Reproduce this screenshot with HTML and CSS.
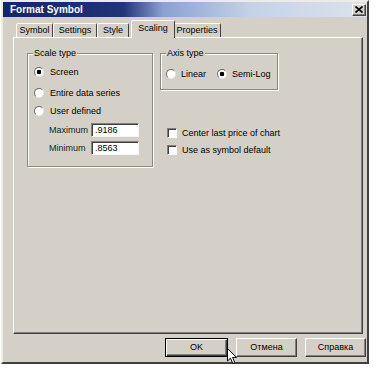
FILE: index.html
```html
<!DOCTYPE html>
<html lang="en">
<head>
  <meta charset="UTF-8">
  <title>Format Symbol</title>
  <link rel="stylesheet" href="styles.css">
</head>
<body>
  <div class="dialog">
    <div class="titlebar">
      <span class="title">Format Symbol</span>
      <div class="close-btn">
        <svg width="8" height="7" viewBox="0 0 8 7"><path d="M0.5 0.5 L7.5 6.5 M7.5 0.5 L0.5 6.5" stroke="#000" stroke-width="1.6"/></svg>
      </div>
    </div>

    <div class="tabs">
      <div class="tab tab-symbol">Symbol</div>
      <div class="tab tab-settings">Settings</div>
      <div class="tab tab-style">Style</div>
      <div class="tab tab-scaling active">Scaling</div>
      <div class="tab tab-properties">Properties</div>
    </div>

    <div class="panel">
      <div class="group scale-group">
        <span class="legend">Scale type</span>
        <div class="option first"><span class="radio checked"></span>Screen</div>
        <div class="option second"><span class="radio"></span>Entire data series</div>
        <div class="option third"><span class="radio"></span>User defined</div>
        <div class="field max-field"><span class="field-label">Maximum</span><span class="input">.9186</span></div>
        <div class="field min-field"><span class="field-label">Minimum</span><span class="input">.8563</span></div>
      </div>

      <div class="right-col">
        <div class="group axis-group">
          <span class="legend">Axis type</span>
          <div class="option-row">
            <div class="option"><span class="radio"></span>Linear</div>
            <div class="option semi"><span class="radio checked"></span>Semi-Log</div>
          </div>
        </div>
        <div class="checks">
          <div class="check-row"><span class="checkbox"></span>Center last price of chart</div>
          <div class="check-row"><span class="checkbox"></span>Use as symbol default</div>
        </div>
      </div>
    </div>

    <div class="buttons">
      <div class="btn default">OK</div>
      <div class="btn">Отмена</div>
      <div class="btn">Справка</div>
    </div>

    <!-- mouse pointer over the OK button -->
    <svg class="cursor" width="11" height="17" viewBox="0 0 11 17">
      <path d="M0.5 0.5 L0.5 13 L3.5 10.2 L5.8 15.5 L7.8 14.6 L5.6 9.4 L9.5 9.4 Z" fill="#fff" stroke="#000" stroke-width="1"/>
    </svg>
  </div>
</body>
</html>
```

FILE: styles.css
```css
body {
  margin: 0;
  background: #ffffff;
  font-family: "Liberation Sans", Arial, sans-serif;
  font-size: 9px;
  color: #000000;
}

.dialog {
  position: relative;
  margin-left: 1px;
  width: 368px;
  height: 364px;
  box-sizing: border-box;
  background: #d4d0c8;
  border: 2px solid;
  border-color: #ecebe6 #404040 #404040 #ecebe6;
  display: flex;
  flex-direction: column;
}

/* Title bar */
.titlebar {
  height: 15px;
  flex: none;
  display: flex;
  align-items: center;
  justify-content: space-between;
  padding: 0 1px 0 7px;
  background: linear-gradient(90deg, #14246a 0%, #203476 33%, #8aa2d0 44%, #c4d2e8 68%, #dce2ec 100%);
  color: #ffffff;
}

.title {
  font-size: 10px;
  font-weight: bold;
}

.close-btn {
  width: 14px;
  height: 12px;
  box-sizing: border-box;
  background: #d4d0c8;
  border: 1px solid;
  border-color: #ffffff #404040 #404040 #ffffff;
  box-shadow: inset -1px -1px #808080;
  display: flex;
  justify-content: center;
  align-items: center;
}

/* Tabs */
.tabs {
  display: flex;
  align-items: flex-end;
  height: 17px;
  margin-top: 3px;
  padding-left: 13px;
  flex: none;
}

.tab {
  height: 14px;
  box-sizing: border-box;
  border: 1px solid;
  border-bottom: none;
  border-color: #ffffff #404040 transparent #ffffff;
  border-radius: 2px 2px 0 0;
  text-align: center;
  line-height: 13px;
  background: #d4d0c8;
}

.tab-symbol { width: 37px; }
.tab-settings { width: 44px; }
.tab-style { width: 32px; }
.tab-scaling { width: 42px; }
.tab-properties { width: 48px; }

.tab.active {
  position: relative;
  z-index: 1;
  height: 18px;
  margin: 0 -2px -1px 2px;
  line-height: 15px;
  width: 44px;
}

/* Tab page */
.panel {
  height: 297px;
  flex: none;
  margin: 0 4px 0 10px;
  box-sizing: border-box;
  border: 1px solid;
  border-color: #ffffff #404040 #404040 #ffffff;
  box-shadow: inset -1px -1px #808080;
  padding: 15px 0 0 13px;
  display: flex;
  align-items: flex-start;
  gap: 7px;
}

.group {
  position: relative;
  box-sizing: border-box;
  border: 1px solid #8c8880;
  box-shadow: inset 1px 1px #ffffff, 1px 1px #ffffff;
}

.legend {
  position: absolute;
  top: -6px;
  left: 5px;
  padding: 0 1px;
  background: #d4d0c8;
  line-height: 11px;
}

.scale-group {
  width: 126px;
  height: 114px;
  padding: 11px 0 0 6px;
}

.option {
  display: flex;
  align-items: center;
  gap: 6px;
  height: 13px;
}

.option.second { margin-top: 8px; }
.option.third { margin-top: 5px; }

.radio {
  width: 10px;
  height: 10px;
  box-sizing: border-box;
  border-radius: 50%;
  background: #ffffff;
  border: 1px solid;
  border-color: #6e6a64 #e8e6e2 #e8e6e2 #6e6a64;
  flex: none;
}

.radio.checked {
  background: radial-gradient(circle, #000000 0, #000000 2px, #ffffff 2.6px);
}

.field {
  display: flex;
  align-items: center;
  height: 14px;
  margin-left: 15px;
}

.max-field { margin-top: 6px; }
.min-field { margin-top: 4px; }

.field-label {
  width: 42px;
  color: #202020;
}

.input {
  width: 48px;
  height: 14px;
  box-sizing: border-box;
  background: #ffffff;
  border: 1px solid;
  border-color: #808080 #f4f4f4 #f4f4f4 #808080;
  box-shadow: inset 1px 1px #404040;
  padding: 0 0 0 3px;
  line-height: 12px;
}

.right-col {
  display: flex;
  flex-direction: column;
}

.axis-group {
  width: 118px;
  height: 37px;
  padding: 13px 0 0 5px;
}

.option-row {
  display: flex;
}

.option-row .option {
  gap: 5px;
}

.option.semi {
  margin-left: 11px;
}

.checks {
  margin-top: 36px;
  padding-left: 7px;
  display: flex;
  flex-direction: column;
  gap: 4px;
}

.check-row {
  display: flex;
  align-items: center;
  gap: 5px;
  height: 13px;
}

.checkbox {
  width: 10px;
  height: 10px;
  box-sizing: border-box;
  background: #ffffff;
  border: 1px solid;
  border-color: #808080 #ffffff #ffffff #808080;
  box-shadow: inset 1px 1px #404040;
  flex: none;
}

/* Bottom buttons */
.buttons {
  display: flex;
  justify-content: flex-end;
  gap: 8px;
  margin-top: 4px;
  padding-right: 1px;
}

.btn {
  width: 61px;
  height: 19px;
  box-sizing: border-box;
  border: 1px solid;
  border-color: #ffffff #404040 #404040 #ffffff;
  box-shadow: inset -1px -1px #808080;
  text-align: center;
  line-height: 17px;
}

.btn.default {
  width: 63px;
  border-color: #000000;
  box-shadow: inset 1px 1px #ffffff, inset -1px -1px #404040, inset -2px -2px #808080;
}

.cursor {
  position: absolute;
  left: 224px;
  top: 346px;
}
```
